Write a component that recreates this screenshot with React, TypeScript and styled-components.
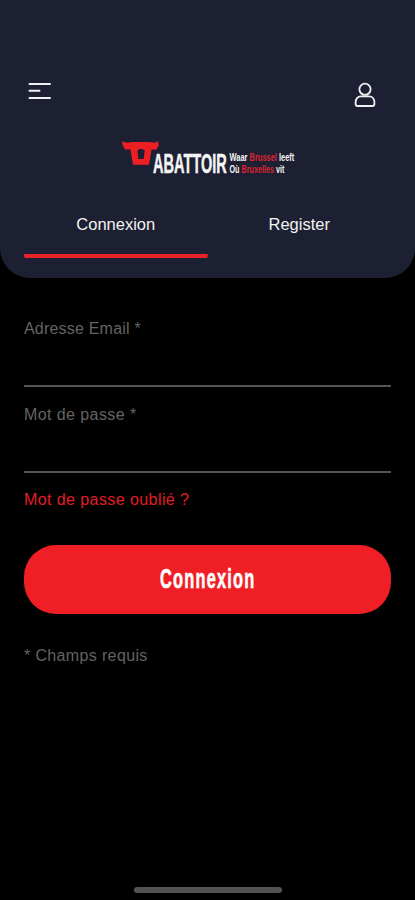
import React from "react";
import styled, { createGlobalStyle } from "styled-components";

const GlobalStyle = createGlobalStyle`
  * { box-sizing: border-box; }
  body { margin: 0; background: #000; font-family: "Liberation Sans", Arial, sans-serif; }
`;

const Screen = styled.div`
  width: 100%;
  height: 900px;
  display: flex;
  flex-direction: column;
  background: #000;
`;

const Header = styled.header`
  height: 278px;
  padding: 80px 24px 0;
  display: flex;
  flex-direction: column;
  background: #1d2032;
  border-radius: 0 0 30px 30px;
`;

const Toolbar = styled.div`
  height: 60px;
  padding: 0 14px 0 4px;
  display: flex;
  justify-content: space-between;
  align-items: flex-start;
`;

const IconButton = styled.button`
  padding: 0;
  border: 0;
  background: none;
  color: #f0f0f2;
  line-height: 0;
`;

const Logo = styled.svg`
  display: block;
  flex: none;
  width: 176px;
  height: 40px;
  margin-left: 96px;
`;

const Tabs = styled.nav`
  margin-top: 33px;
  display: grid;
  grid-template-columns: 1fr 1fr;
`;

const Tab = styled.button<{ $active?: boolean }>`
  height: 45px;
  padding: 0 0 20px;
  border: 0;
  border-bottom: 4px solid transparent;
  background: linear-gradient(${p => (p.$active ? "#e92129, #e92129" : "transparent, transparent")}) no-repeat bottom / 100% 4px border-box;
  border-radius: 2px;
  color: #f2f2f0;
  font: 16.5px/20px "Liberation Sans", Arial, sans-serif;
`;

const Form = styled.form`
  padding: 41px 24px 0;
  display: flex;
  flex-direction: column;
`;

const Field = styled.label`
  height: 85.5px;
  display: flex;
  flex-direction: column;
  color: #646464;
  font-size: 16px;
  line-height: 20px;
`;

const FieldName = styled.span<{ $spacing: number }>`
  letter-spacing: ${p => p.$spacing}px;
`;

const Input = styled.input`
  width: 100%;
  height: 48px;
  padding: 0;
  border: 0;
  border-bottom: 2px solid #555;
  background: transparent;
  color: #fff;
  font-size: 16px;
  outline: 0;
`;

const ForgotLink = styled.a`
  color: #e31d25;
  font-size: 16px;
  line-height: 20px;
  letter-spacing: 0.42px;
`;

const Submit = styled.button`
  height: 69px;
  margin-top: 35px;
  padding: 0 0 1px;
  display: flex;
  align-items: center;
  justify-content: center;
  border: 0;
  border-radius: 32px;
  background: #f01f25;
  color: #fff;
`;

const SubmitText = styled.span`
  font: bold 27px/32px "Liberation Sans", Arial, sans-serif;
  letter-spacing: 2px;
  -webkit-text-stroke: 0.6px #fff;
  transform: scaleX(0.605);
`;

const Note = styled.p`
  margin: 32px 0 0;
  color: #636363;
  font-size: 16px;
  line-height: 20px;
  letter-spacing: 0.36px;
`;

const HomeBar = styled.div`
  width: 148px;
  height: 6px;
  margin: auto auto 7px;
  border-radius: 3px;
  background: #535353;
`;

const MenuIcon = () => (
  <svg width="24" height="22" viewBox="0 0 24 22" fill="none" stroke="currentColor" strokeWidth="2" strokeLinecap="round">
    <path d="M1.5 4H22M1.5 10.8H11.5M1.5 18H22" />
  </svg>
);

const UserIcon = () => (
  <svg width="24" height="28" viewBox="0 0 24 28" fill="none" stroke="currentColor" strokeWidth="1.8">
    <circle cx="12" cy="9.3" r="5.6" />
    <path d="M8 16.3C4.6 16.3 2.6 19 2.6 22.4V24Q2.6 26 4.6 26H19.4Q21.4 26 21.4 24V22.4C21.4 19 19.4 16.3 16 16.3Z" />
  </svg>
);

const BrandLogo = () => (
  <Logo viewBox="0 0 176 40" fill="#f5f5f5" fontFamily="Liberation Sans, Arial, sans-serif" fontWeight="bold">
    <path fill="#ed1f25" fillRule="evenodd" d="M2.3 1.2L7 2.8L12.5 2H29L34.5 2.8L38 1.2L38.8 5.5L36.5 9.5H31.5L29 24.8H13L10.5 9.5H5L2.3 4.5ZM17.3 10.5L18.3 19H23.7L24.7 10.5L22.5 9H19.5Z" />
    <text transform="translate(33 33) scale(0.52 1)" fontSize="28" stroke="#f5f5f5" strokeWidth="0.5">ABATTOIR</text>
    <g fontSize="10.3">
      <text transform="translate(109.5 21.3) scale(0.725 1)">
        Waar <tspan fill="#dc2530">Brussel</tspan> leeft
      </text>
      <text transform="translate(109.5 33.2) scale(0.7 1)">
        Où <tspan fill="#dc2530">Bruxelles</tspan> vit
      </text>
    </g>
  </Logo>
);

export default function App() {
  return (
    <Screen>
      <GlobalStyle />
      <Header>
        <Toolbar>
          <IconButton aria-label="Menu"><MenuIcon /></IconButton>
          <IconButton aria-label="Profil"><UserIcon /></IconButton>
        </Toolbar>
        <BrandLogo />
        <Tabs>
          <Tab $active>Connexion</Tab>
          <Tab>Register</Tab>
        </Tabs>
      </Header>
      <Form>
        <Field>
          <FieldName $spacing={0.2}>Adresse Email *</FieldName>
          <Input type="email" />
        </Field>
        <Field>
          <FieldName $spacing={0.42}>Mot de passe *</FieldName>
          <Input type="password" />
        </Field>
        <ForgotLink>Mot de passe oublié ?</ForgotLink>
        <Submit type="button"><SubmitText>Connexion</SubmitText></Submit>
        <Note>* Champs requis</Note>
      </Form>
      <HomeBar />
    </Screen>
  );
}
